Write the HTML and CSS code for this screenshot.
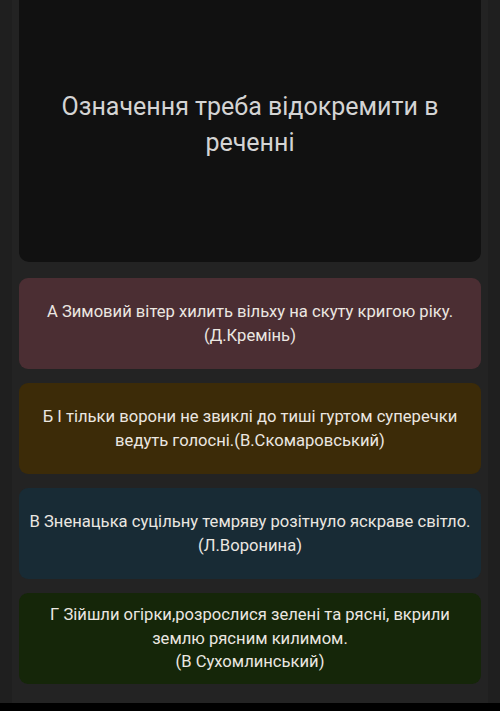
FILE: index.html
```html
<!DOCTYPE html>
<html lang="uk">
<head>
    <meta charset="UTF-8">
    <meta name="viewport" content="width=device-width, initial-scale=1.0">
    <title>Означення</title>
    <link rel="stylesheet" href="styles.css">
</head>
<body>

    <div class="panel">
        <div class="question">
            <p>Означення треба відокремити в<br>реченні</p>
        </div>

        <div class="answers">
            <div class="answer answer-a">
                <p>А Зимовий вітер хилить вільху на скуту кригою ріку.<br>(Д.Кремінь)</p>
            </div>
            <div class="answer answer-b">
                <p>Б І тільки ворони не звиклі до тиші гуртом суперечки<br>ведуть голосні.(В.Скомаровський)</p>
            </div>
            <div class="answer answer-c">
                <p>В Зненацька суцільну темряву розітнуло яскраве світло.<br>(Л.Воронина)</p>
            </div>
            <div class="answer answer-d">
                <p>Г Зійшли огірки,розрослися зелені та рясні, вкрили<br>землю рясним килимом.<br>(В Сухомлинський)</p>
            </div>
        </div>
    </div>

    <div class="bottom-bar"></div>

</body>
</html>
```

FILE: styles.css
```css
body {
    margin: 0;
    font-family: Roboto, "Liberation Sans", Arial, sans-serif;
    background-color: #1f1f1f;
    text-align: center;
}

p {
    margin: 0;
}

.panel {
    margin: 0 12px;
    padding: 0 7px 20px 7px;
    background-color: #232323;
    height: 683px;
}

.question {
    height: 262px;
    background-color: #111111;
    border-radius: 0 0 10px 10px;
    display: flex;
    align-items: center;
    justify-content: center;
    padding-bottom: 12px;
    box-sizing: border-box;
}

.question p {
    color: #d4d4d4;
    font-size: 25px;
    line-height: 36px;
}

.answers {
    display: flex;
    flex-direction: column;
    gap: 14px;
    margin-top: 16px;
}

.answer {
    height: 91px;
    border-radius: 9px;
    display: flex;
    align-items: center;
    justify-content: center;
}

.answer p {
    color: #ebe7e1;
    font-size: 16.6px;
    line-height: 23.5px;
}

.answer-a {
    background-color: #4b2e33;
}

.answer-b {
    background-color: #3c2b08;
}

.answer-c {
    background-color: #182b35;
}

.answer-d {
    background-color: #152609;
}

.bottom-bar {
    height: 8px;
    background-color: #000000;
}
```
